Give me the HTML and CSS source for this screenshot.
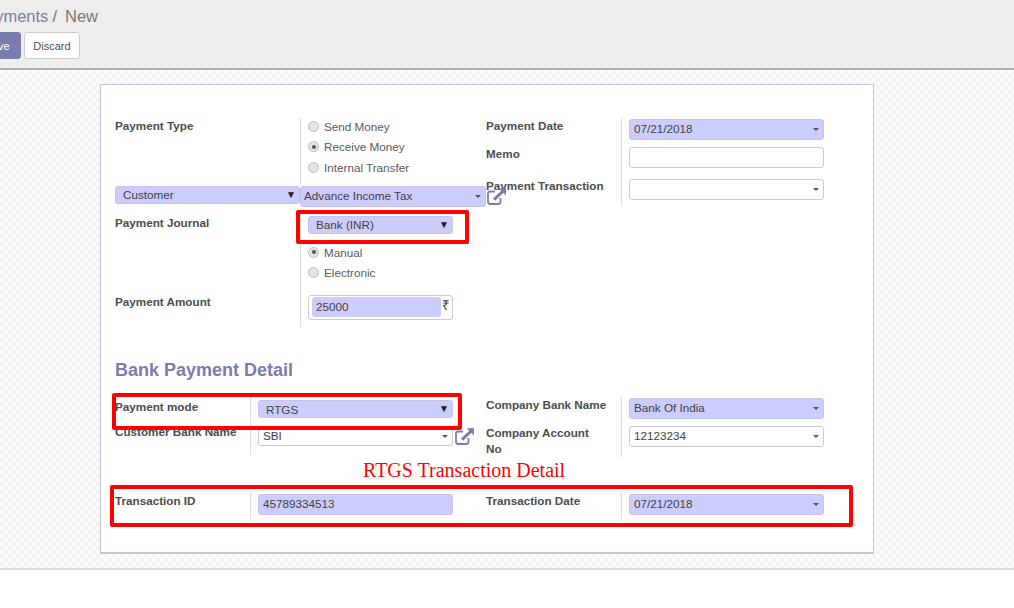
FILE: index.html
```html
<!DOCTYPE html>
<html lang="en">
<head>
<meta charset="utf-8">
<title>Payments / New</title>
<link rel="stylesheet" href="styles.css">
</head>
<body>
<svg class="defs" width="0" height="0" aria-hidden="true">
  <symbol id="ext" viewBox="0 0 19 18">
    <path d="M8 4.500H3.200A2.200 2.200 0 0 0 1 6.700v8.100A2.200 2.200 0 0 0 3.200 17h8.100a2.200 2.200 0 0 0 2.200-2.200V11" fill="none" stroke="currentColor" stroke-width="1.800"/>
    <path d="M6 11.600 14.300 3.700 11.800 1.200H19V8.400L16.400 5.800 8.100 13.800Z" fill="currentColor"/>
  </symbol>
</svg>
<header class="panel">
  <div class="panel-inner">
    <div class="crumbs"><span class="crumb-link">Payments</span><span class="crumb-sep">/</span><span class="crumb-now">New</span></div>
    <div class="buttons">
      <button class="btn btn-primary">Save</button>
      <button class="btn">Discard</button>
    </div>
  </div>
</header>
<main class="backdrop">
  <section class="sheet">
    <div class="columns">
      <div class="grid grid-wide top-left">
        <div class="label">Payment Type</div>
        <div class="cell radios">
          <div class="radio"><i class="dot"></i>Send Money</div>
          <div class="radio"><i class="dot on"></i>Receive Money</div>
          <div class="radio"><i class="dot"></i>Internal Transfer</div>
        </div>
        <div class="cell-flat"><div class="field req native customer">Customer<b class="glyph">▼</b></div></div>
        <div class="cell-flat adv-wrap">
          <div class="field req adv">Advance Income Tax<i class="caret"></i></div>
          <svg class="ext ext-adv"><use href="#ext"/></svg>
        </div>
        <div class="label label-journal">Payment Journal</div>
        <div class="cell journal">
          <div class="field req native bank">Bank (INR)<b class="glyph">▼</b></div>
          <div class="radio"><i class="dot on"></i>Manual</div>
          <div class="radio"><i class="dot"></i>Electronic</div>
        </div>
        <div class="label label-amount">Payment Amount</div>
        <div class="cell">
          <div class="amount"><span class="amount-val">25000</span><span class="rupee">₹</span></div>
        </div>
      </div>
      <div class="grid top-right">
        <div class="label">Payment Date</div>
        <div class="cell"><div class="field req">07/21/2018<i class="caret"></i></div></div>
        <div class="label">Memo</div>
        <div class="cell"><div class="field"></div></div>
        <div class="label">Payment Transaction</div>
        <div class="cell"><div class="field">&nbsp;<i class="caret"></i></div></div>
      </div>
    </div>

    <h2 class="heading">Bank Payment Detail</h2>

    <div class="columns">
      <div class="grid bank-left">
        <div class="label label-mode">Payment mode</div>
        <div class="cell"><div class="field req native mode">RTGS<b class="glyph">▼</b></div></div>
        <div class="label label-customer">Customer Bank Name</div>
        <div class="cell adv-wrap">
          <div class="field sbi">SBI<i class="caret"></i></div>
          <svg class="ext ext-sbi"><use href="#ext"/></svg>
        </div>
      </div>
      <div class="grid bank-right">
        <div class="label">Company Bank Name</div>
        <div class="cell"><div class="field req">Bank Of India<i class="caret"></i></div></div>
        <div class="label label-wrap">Company Account No</div>
        <div class="cell"><div class="field">12123234<i class="caret"></i></div></div>
      </div>
    </div>

    <p class="annotation">RTGS Transaction Detail</p>

    <div class="columns">
      <div class="grid tx">
        <div class="label">Transaction ID</div>
        <div class="cell"><div class="field req">45789334513</div></div>
      </div>
      <div class="grid tx">
        <div class="label">Transaction Date</div>
        <div class="cell"><div class="field req">07/21/2018<i class="caret"></i></div></div>
      </div>
    </div>

    <div class="mark mark-journal"></div>
    <div class="mark mark-mode"></div>
    <div class="mark mark-tx"></div>
  </section>
</main>
</body>
</html>
```
FILE: styles.css
```css
* { box-sizing: border-box; }
html, body { margin: 0; height: 100%; background: #fff; overflow: hidden; }
body { font-family: "Liberation Sans", Arial, sans-serif; font-size: 11.7px; color: #4c4c4c; }
.defs { position: absolute; }

.panel { height: 70px; background: #eeedeb; border-bottom: 2px solid #aeaeae; overflow: hidden; }
.panel-inner { margin-left: -27px; padding-top: 7px; }
.crumbs { display: flex; margin-left: 2px; font-size: 16.500px; line-height: 19px; height: 25px; }
.crumb-link { color: #7c7bad; }
.crumb-sep { color: #777; margin: 0 8px 0 4px; }
.crumb-now { color: #777; }
.buttons { display: flex; gap: 3px; }
.btn { height: 27px; width: 56px; padding: 0; border: 1px solid #ccc; border-radius: 3px; background: #fff; color: #4c4c4c; font: 11px "Liberation Sans", Arial, sans-serif; }
.btn-primary { width: 48px; background: #7c7bad; border-color: #7c7bad; color: #fff; }

.backdrop { height: 500px; padding: 14px 0 0 100px; border-bottom: 2px solid #dedede;
  background: repeating-conic-gradient(#f3f3f3 0 25%, #fbfbfb 0 50%) 0 0 / 8px 8px; }
.sheet { position: relative; width: 774px; height: 470px; padding: 33px 0 0 14px; background: #fff; border: 1px solid #c6c3d8; border-bottom-width: 2px; }

.columns { display: flex; }
.grid { display: grid; align-content: start; }
.label { font-weight: 700; line-height: 16px; color: #4c4c4c; }
.cell { border-left: 1px solid #ddd; padding-left: 7px; }
.cell-flat { min-width: 0; }

.top-left { width: 371px; grid-template-columns: 185px 186px; grid-template-rows: 68px 24px 80px 37px; }
.top-right { grid-template-columns: 135px 203px; grid-template-rows: 28px 32px 28px; }
.bank-left { width: 371px; grid-template-columns: 135px 236px; grid-template-rows: 26px 32px; }
.bank-right { grid-template-columns: 135px 203px; grid-template-rows: 28px 32px; }
.tx { width: 371px; grid-template-columns: 135px 203px; grid-template-rows: 28px; }
.tx:last-child { width: auto; }

.bank-left .cell { width: 203px; }
.bank-left .cell.adv-wrap { width: 236px; }

.field { position: relative; display: flex; align-items: center; width: 195px; height: 21px; margin-top: 1px; padding: 0 4px 2px; background: #fff; border: 1px solid #ccc; border-radius: 3px; color: #3f3f3f; }
.field.req { background: #cdcdfd; border-color: #c4c4ea; }
.native { height: 18px; padding: 0 4px 1px 7px; }
.glyph { position: absolute; right: 3px; top: 0; font-size: 10px; line-height: 15px; color: #222; font-weight: 400; }
.caret { position: absolute; right: 4px; top: 8px; width: 0; height: 0; border: 3px solid transparent; border-top: 3px solid #555; border-bottom: 0; }

.customer { width: 185px; height: 18px; margin: 0; }
.adv-wrap { position: relative; }
.adv { width: 186px; margin: 0; padding-left: 3px; }
.ext { position: absolute; width: 19px; height: 18px; color: #7c7bad; }
.ext-adv { left: 187px; top: 1px; }
.ext-sbi { left: 204px; top: 4px; }

.radios { padding-top: 0; }
.radios .radio:first-child { margin-top: -2px; }
.radio { display: flex; align-items: center; height: 20.500px; color: #5a5a5a; }
.dot { flex: none; position: relative; width: 11px; height: 11px; margin-right: 5px; border-radius: 50%; background: #e4e4e4; border: 1px solid #bdbdbd; }
.dot.on::after { content: ""; position: absolute; left: 2.500px; top: 2.500px; width: 4px; height: 4px; border-radius: 50%; background: #555; }
.journal .bank { width: 145px; margin-top: 6px; margin-bottom: 8px; }
.label-journal { padding-top: 5px; }
.label-amount { padding-top: 4px; }
.label-mode { padding-top: 2px; }
.label-customer { padding-top: 1px; }
.label-wrap { padding-right: 20px; }
.amount { display: flex; width: 145px; height: 25px; margin-top: 5px; padding: 1px 0 0 3px; border: 1px solid #ccc; border-radius: 3px; }
.amount-val { width: 129px; height: 20px; padding-left: 4px; line-height: 20px; background: #cdcdfd; border-radius: 3px; color: #3f3f3f; }
.rupee { padding-left: 1px; font-size: 13.500px; line-height: 17px; color: #3f3f3f; }

.heading { margin: 32px 0 16px; font-size: 18px; line-height: 22px; font-weight: 700; color: #7c7bad; }
.mode { width: 195px; margin-top: 3px; padding-bottom: 0; }
.sbi { margin-top: 3px; height: 20px; }
.annotation { margin: 0; height: 36px; padding-left: 248px; font: 20px/27px "Liberation Serif", "Times New Roman", serif; color: #f00; }

.mark { position: absolute; border: 4px solid #f00; border-radius: 2px; }
.mark-journal { left: 195px; top: 125px; width: 173px; height: 34px; }
.mark-mode { left: 11px; top: 308px; width: 350px; height: 37px; }
.mark-tx { left: 9px; top: 400px; width: 743px; height: 42px; }
```
